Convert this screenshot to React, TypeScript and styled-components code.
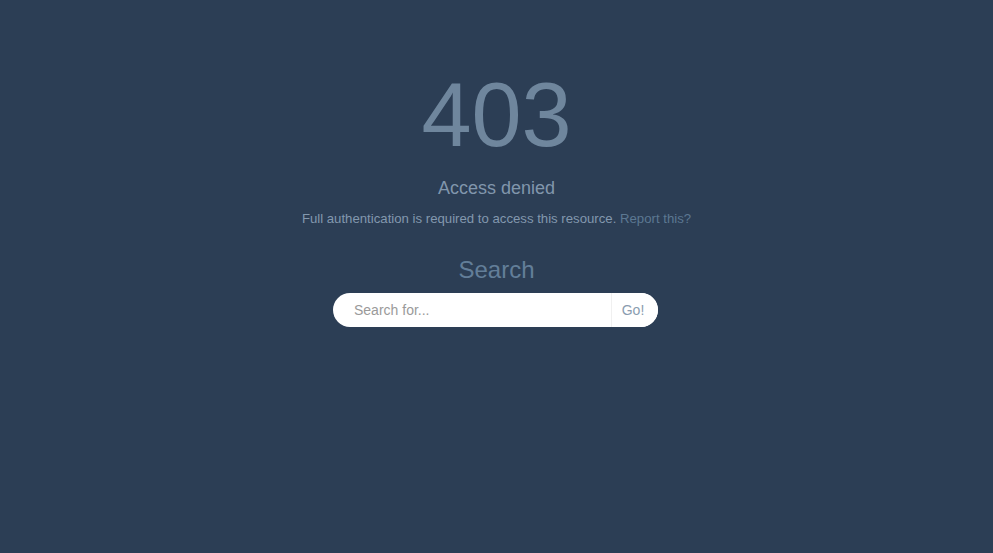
import { createGlobalStyle } from "styled-components";
import styled from "styled-components";

const GlobalStyle = createGlobalStyle`
  html, body {
    margin: 0;
    padding: 0;
    background-color: #2c3e55;
  }
  body {
    font-family: "Liberation Sans", Arial, sans-serif;
  }
`;

const Page = styled.main`
  width: 100%;
  min-height: 553px;
  background-color: #2c3e55;
  display: flex;
  flex-direction: column;
  align-items: center;
  padding-top: 65px;
  box-sizing: border-box;
  text-align: center;
`;
const Code = styled.h1`
  margin: 0;
  font-size: 90px;
  line-height: 100px;
  font-weight: 400;
  color: #6f869d;
`;
const Title = styled.h2`
  margin: 11px 0 0;
  font-size: 18px;
  line-height: 24px;
  font-weight: 400;
  color: #8196ac;
`;
const Message = styled.p`
  margin: 10px 0 0;
  font-size: 13.2px;
  line-height: 18px;
  color: #8398ae;
`;
const ReportLink = styled.a`
  color: #5c7892;
  text-decoration: none;
`;
const SearchHeading = styled.h3`
  margin: 27px 0 0;
  font-size: 24px;
  line-height: 30px;
  font-weight: 400;
  color: #637e99;
`;
const SearchForm = styled.form`
  margin-top: 8px;
  margin-right: 2px;
  width: 325px;
  height: 34px;
  display: flex;
  background-color: #ffffff;
  border-radius: 17px;
  overflow: hidden;
`;
const SearchInput = styled.input`
  flex: 1;
  min-width: 0;
  border: none;
  outline: none;
  padding: 0 0 0 21px;
  font-family: "Liberation Sans", Arial, sans-serif;
  font-size: 14px;
  color: #555;
  background: transparent;
  &::placeholder {
    color: #9a9a9a;
  }
`;
const GoButton = styled.button`
  width: 47px;
  border: none;
  border-left: 1px solid #f0f0f0;
  background: #ffffff;
  font-family: "Liberation Sans", Arial, sans-serif;
  font-size: 14px;
  color: #8a9cb0;
  padding: 0 4px 0 0;
  cursor: pointer;
`;

const App = () => {
  return (
    <>
      <GlobalStyle />
      <Page>
        <Code>403</Code>
        <Title>Access denied</Title>
        <Message>
          Full authentication is required to access this resource.{" "}
          <ReportLink href="#">Report this?</ReportLink>
        </Message>
        <SearchHeading>Search</SearchHeading>
        <SearchForm onSubmit={(e) => e.preventDefault()}>
          <SearchInput placeholder="Search for..." />
          <GoButton type="submit">Go!</GoButton>
        </SearchForm>
      </Page>
    </>
  );
};

export default App;
